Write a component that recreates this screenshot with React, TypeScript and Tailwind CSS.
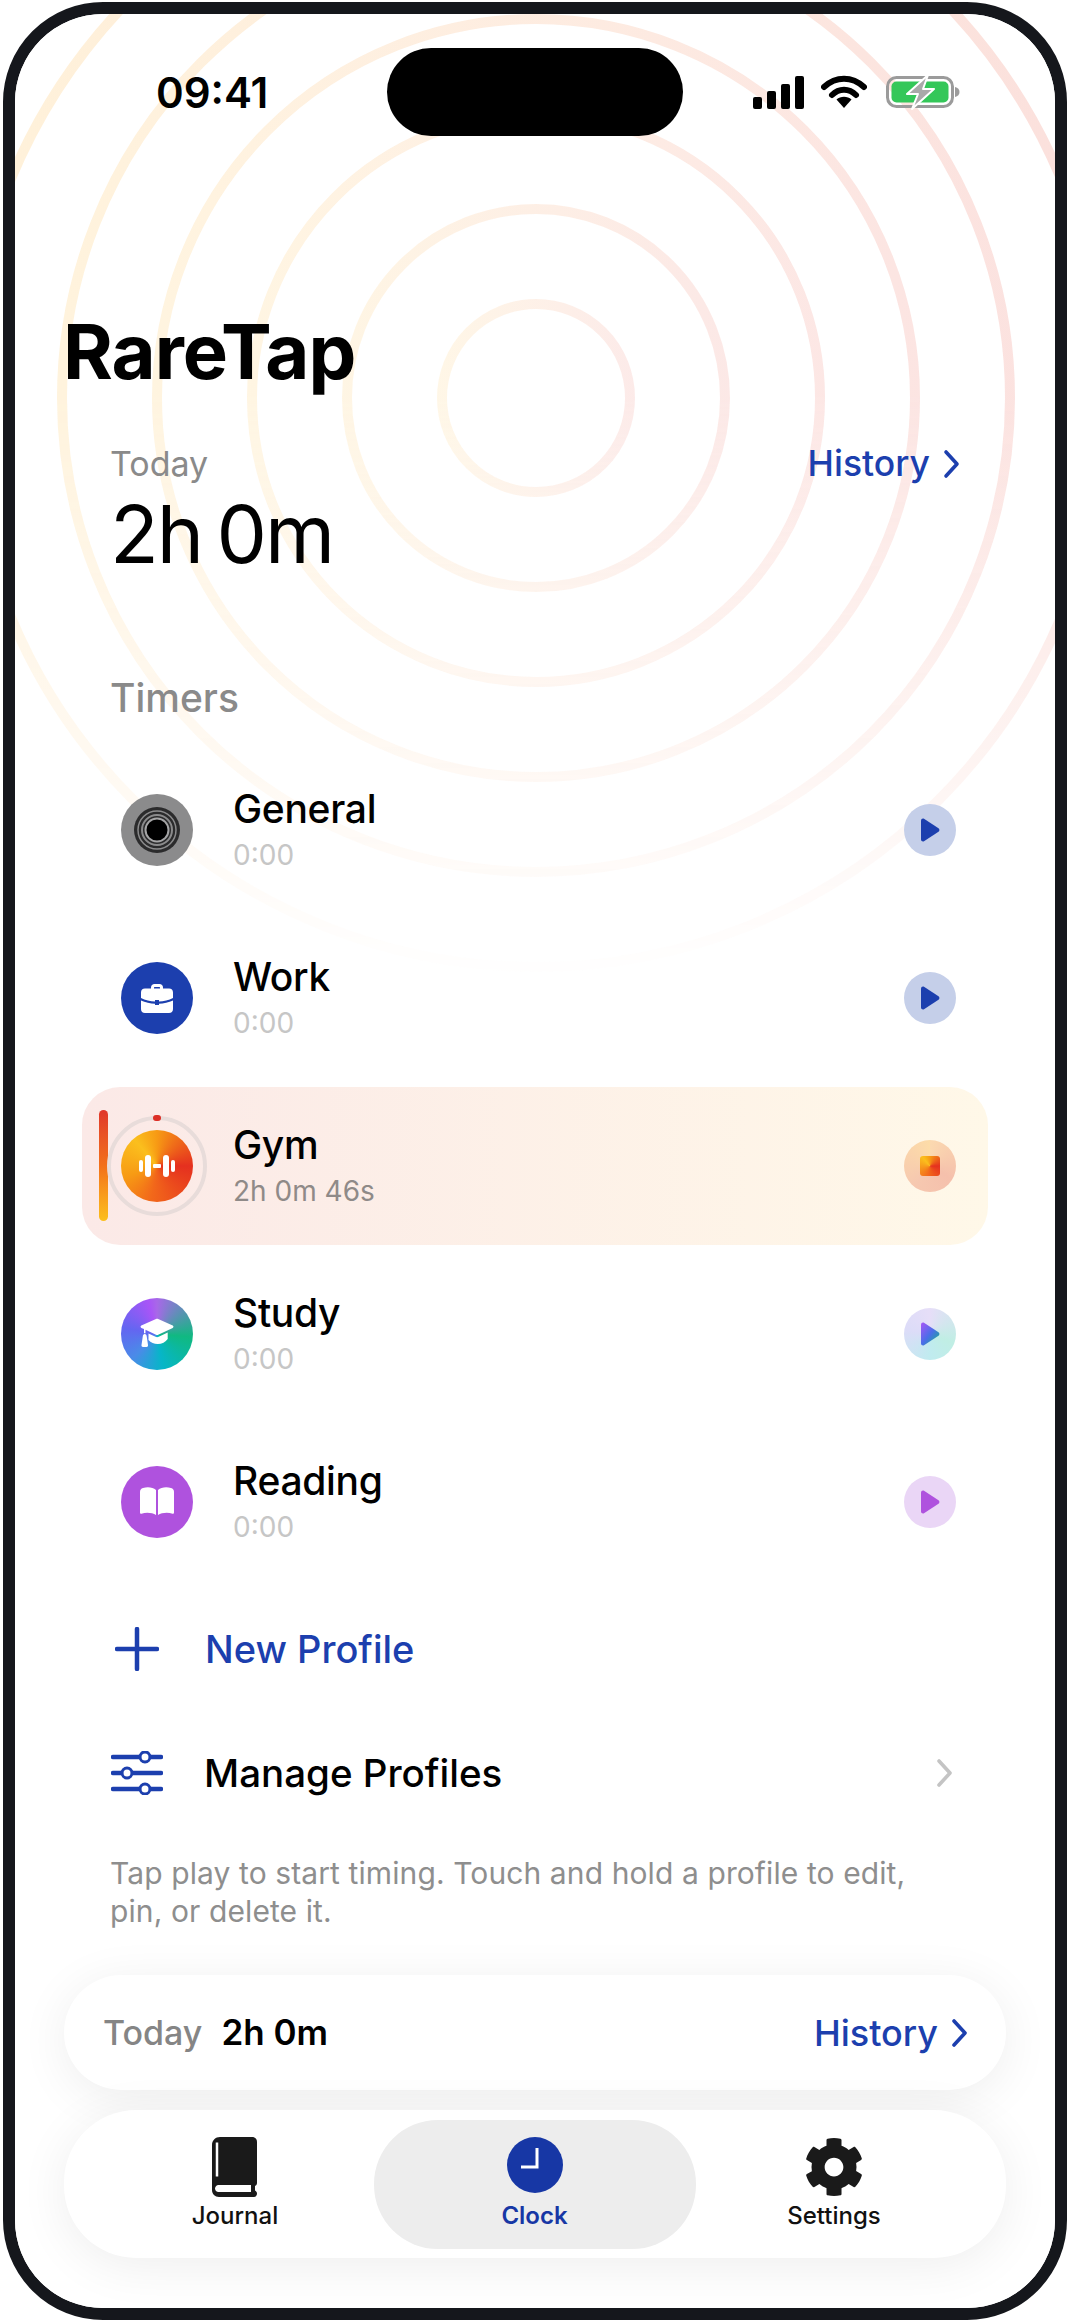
import { FaCog } from "react-icons/fa";

const FONT = "font-['Inter','Liberation_Sans',sans-serif]";

function Play({ fill }: { fill: string }) {
  return (
    <svg width="22" height="26" viewBox="0 0 22 26">
      <path
        d="M2 3.5c0-1.6 1.700-2.500 3-1.700l14.500 9.500c1.200 .8 1.200 2.600 0 3.400L5 24.200c-1.300 .8-3 -.1-3-1.700z"
        fill={fill}
      />
    </svg>
  );
}

function Briefcase() {
  return (
    <svg width="36" height="36" viewBox="0 0 36 36" fill="white">
      <path d="M12 9V7.500C12 5.500 13.500 4 15.500 4h5C22.500 4 24 5.500 24 7.500V9h-3V7.500c0-.4-.2-.6-.6-.6h-4.800c-.4 0-.6 .2-.6 .6V9z" />
      <path d="M2 12.500C2 10 3.500 8.500 6 8.500h24c2.500 0 4 1.500 4 4V18c-4 2.200-9.500 3.400-14 3.600V20h-4v1.600C11.500 21.400 6 20.200 2 18z" />
      <path d="M2 20.500c4 2 9.500 3 14 3.200V25h4v-1.300c4.500-.2 10-1.200 14-3.200V29c0 2.500-1.500 4-4 4H6c-2.500 0-4-1.500-4-4z" />
    </svg>
  );
}

function Dumbbell() {
  return (
    <svg width="38" height="28" viewBox="0 0 38 28" fill="white">
      <rect x="1" y="8" width="4" height="12" rx="2" />
      <rect x="7" y="3" width="6" height="22" rx="3" />
      <rect x="15" y="12" width="8" height="4" rx="1" />
      <rect x="25" y="3" width="6" height="22" rx="3" />
      <rect x="33" y="8" width="4" height="12" rx="2" />
    </svg>
  );
}

function Cap() {
  return (
    <svg width="36" height="36" viewBox="0 0 36 36" fill="white">
      <path d="M17 3c.7-.3 1.500-.3 2.200 0l14.500 6.600c1 .5 1 1.800 0 2.300L19.200 18.800c-.7 .3-1.500 .3-2.200 0L6.500 13.800v3.500H5v-4.300L2.300 11.900c-1-.5-1-1.800 0-2.300z" />
      <path d="M9.500 17.500l7 3.300c1 .5 2.200 .5 3.200 0l9-4.200v6.400c-2 3-6 5-10 5-3.500 0-7-1.500-9.200-4z" />
      <path d="M5.700 18c1.200 0 2 1 2 2.300l1.300 8.700c.2 1-.5 2-1.500 2H4c-1 0-1.700-1-1.500-2l1.300-8.700c0-1.300.8-2.300 1.900-2.300z" />
    </svg>
  );
}

function OpenBook() {
  return (
    <svg width="36" height="32" viewBox="0 0 36 32" fill="white">
      <path d="M1 6c0-2 1-3.500 3-4 5-1.300 10-.6 13 2v25c-3.500-2.400-10-3-14.500-1.300C1.700 28 1 27.500 1 26.500z" />
      <path d="M35 6c0-2-1-3.500-3-4-5-1.300-10-.6-13 2v25c3.500-2.400 10-3 14.500-1.300 .8 .3 1.500-.2 1.500-1.200z" />
    </svg>
  );
}

function Chevron({ className }: { className: string }) {
  return (
    <svg className={className} width="17" height="30" viewBox="0 0 17 30" fill="none">
      <path d="M3 3l11 12L3 27" stroke="currentColor" strokeWidth="3.600" strokeLinecap="round" strokeLinejoin="round" />
    </svg>
  );
}

const rows = [
  { name: "General", time: "0:00", kind: "general" },
  { name: "Work", time: "0:00", kind: "work" },
  { name: "Gym", time: "2h 0m 46s", kind: "gym" },
  { name: "Study", time: "0:00", kind: "study" },
  { name: "Reading", time: "0:00", kind: "reading" },
];

function RowIcon({ kind }: { kind: string }) {
  if (kind === "general") {
    return (
      <div className="flex h-[72px] w-[72px] items-center justify-center rounded-full bg-[#8b8b8c]">
        <svg width="48" height="48" viewBox="0 0 48 48" fill="none">
          <circle cx="24" cy="24" r="23" fill="#2b2b2c" />
          <circle cx="24" cy="24" r="19" stroke="#8b8b8c" strokeWidth="1.500" />
          <circle cx="24" cy="24" r="15" stroke="#8b8b8c" strokeWidth="2" />
          <circle cx="24" cy="24" r="11.500" fill="#000" stroke="#a5a5a6" strokeWidth="2" />
        </svg>
      </div>
    );
  }
  if (kind === "work") {
    return (
      <div className="flex h-[72px] w-[72px] items-center justify-center rounded-full bg-[#1c3fae]">
        <Briefcase />
      </div>
    );
  }
  if (kind === "gym") {
    return (
      <div className="relative flex h-[72px] w-[72px] items-center justify-center">
        <div className="absolute -inset-[14px] rounded-full border-[4px] border-[#e8dcda]" />
        <div className="absolute -top-[15px] left-[32px] h-[6px] w-[8px] rounded-full bg-[#dc2f26]" />
        <div className="flex h-[72px] w-[72px] items-center justify-center rounded-full bg-[conic-gradient(from_0deg,#f79a14,#e5301f_90deg,#f2681a_190deg,#f79a14_250deg,#fbbf1d_320deg,#f79a14)]">
          <Dumbbell />
        </div>
      </div>
    );
  }
  if (kind === "study") {
    return (
      <div className="flex h-[72px] w-[72px] items-center justify-center rounded-full bg-[conic-gradient(from_0deg,#a868e8,#10b981_95deg,#06b6c8_170deg,#4a8be8_225deg,#6366f1_280deg,#a855f7_345deg,#a868e8)]">
        <Cap />
      </div>
    );
  }
  return (
    <div className="flex h-[72px] w-[72px] items-center justify-center rounded-full bg-[#af52de]">
      <OpenBook />
    </div>
  );
}

function RowAction({ kind }: { kind: string }) {
  if (kind === "gym") {
    return (
      <div className="flex h-[52px] w-[52px] items-center justify-center rounded-full bg-[conic-gradient(from_0deg,#fbd9b0,#f5c0ac_120deg,#f6c8b0_220deg,#fddca8)]">
        <div className="h-[20px] w-[20px] rounded-[3px] bg-[conic-gradient(from_0deg,#f79a14,#e5301f_90deg,#f2681a_190deg,#fbbf1d_320deg,#f79a14)]" />
      </div>
    );
  }
  if (kind === "study") {
    return (
      <div className="flex h-[52px] w-[52px] items-center justify-center rounded-full bg-[conic-gradient(from_0deg,#e6def8,#c0eee4_110deg,#c0ebef_180deg,#dcdcf8_280deg,#e6def8)]">
        <svg width="22" height="26" viewBox="0 0 22 26">
          <defs>
            <linearGradient id="studyPlay" x1="0" y1="0" x2="1" y2="1">
              <stop offset="0" stopColor="#a855f7" />
              <stop offset="0.5" stopColor="#4a6ee8" />
              <stop offset="1" stopColor="#10b981" />
            </linearGradient>
          </defs>
          <path
            d="M2 3.500c0-1.600 1.700-2.500 3-1.700l14.500 9.500c1.200 .8 1.200 2.600 0 3.400L5 24.200c-1.300 .8-3-.1-3-1.700z"
            fill="url(#studyPlay)"
          />
        </svg>
      </div>
    );
  }
  if (kind === "reading") {
    return (
      <div className="flex h-[52px] w-[52px] items-center justify-center rounded-full bg-[#ead6f6]">
        <Play fill="#af52de" />
      </div>
    );
  }
  return (
    <div className="flex h-[52px] w-[52px] items-center justify-center rounded-full bg-[#c5cfe9]">
      <Play fill="#1c3fae" />
    </div>
  );
}

function Row({ name, time, kind }: { name: string; time: string; kind: string }) {
  const active = kind === "gym";
  return (
    <div
      className={
        active
          ? "relative flex h-[158px] items-center rounded-[38px] bg-gradient-to-r from-[#fbe9e7] to-[#fff8e8] pl-[39px] pr-[32px]"
          : "relative flex h-[158px] items-center pl-[39px] pr-[32px]"
      }
    >
      {active && (
        <div className="absolute left-[17px] top-[23px] h-[111px] w-[9px] rounded-full bg-gradient-to-b from-[#e0352a] via-[#f2701a] to-[#fbbf1d]" />
      )}
      <RowIcon kind={kind} />
      <div className="ml-[40px] flex flex-1 flex-col">
        <span className="text-[39px] leading-[46px] font-medium tracking-[-0.3px] text-black">{name}</span>
        <span className={active ? "mt-[4px] text-[28px] leading-[38px] text-[#8f8a88]" : "mt-[4px] text-[28px] leading-[38px] text-[#c6c6c6]"}>
          {time}
        </span>
      </div>
      <RowAction kind={kind} />
    </div>
  );
}

export default function App() {
  return (
    <div className={`${FONT} h-[2323px] w-[1070px] bg-white px-[3px] pt-[2px]`}>
      <div className="h-[2318px] w-[1064px] rounded-[100px] border-[12px] border-[#15171c] bg-white">
        <div className="relative h-full overflow-hidden rounded-[88px] bg-white">
          {/* Decorative rings */}
          <svg
            className="absolute left-0 top-0 [mask-image:linear-gradient(to_bottom,black_38%,transparent_97%)]"
            width="1040"
            height="1000"
            viewBox="0 0 1040 1000"
            fill="none"
          >
            <defs>
              <linearGradient id="ringFade" x1="0" y1="0" x2="1" y2="0">
                <stop offset="0" stopColor="#fff2da" />
                <stop offset="1" stopColor="#fbe0dd" />
              </linearGradient>
            </defs>
            {[94, 189, 284, 379, 474, 569].map((r, i) => (
              <circle key={r} cx="521" cy="384" r={r} stroke="url(#ringFade)" strokeWidth="10" opacity={0.65 + i * 0.07} />
            ))}
          </svg>

          <div className="relative flex h-full flex-col">
            {/* Status bar */}
            <div className="flex h-[122px] items-start pt-[34px]">
              <span className="ml-[141px] w-[231px] pt-[20px] text-[42px] leading-[50px] font-semibold text-black">09:41</span>
              <div className="h-[88px] w-[296px] rounded-full bg-black" />
              <div className="ml-[70px] flex items-center pt-[26px]">
                <div className="flex items-end gap-[5px]">
                  <div className="h-[12px] w-[9px] rounded-[2px] bg-black" />
                  <div className="h-[18px] w-[9px] rounded-[2px] bg-black" />
                  <div className="h-[25px] w-[9px] rounded-[2px] bg-black" />
                  <div className="h-[33px] w-[9px] rounded-[2px] bg-black" />
                </div>
                <svg className="ml-[17px]" width="46" height="34" viewBox="0 0 46 34" fill="none">
                  <path d="M3 12C15 1 31 1 43 12" stroke="black" strokeWidth="6" strokeLinecap="round" />
                  <path d="M11 20C18 13 28 13 35 20" stroke="black" strokeWidth="6" strokeLinecap="round" />
                  <path d="M15.500 24.500c4-3.800 11-3.800 15 0L23 33z" fill="black" />
                </svg>
                <svg className="ml-[19px]" width="74" height="36" viewBox="0 0 74 36" fill="none">
                  <rect x="1.500" y="3.500" width="65" height="29" rx="9" stroke="#9b9b9b" strokeWidth="3" />
                  <rect x="5.500" y="7.500" width="57" height="21" rx="5" fill="#34c759" />
                  <path d="M69 13c3 .6 4.500 2.500 4.500 5S72 22.400 69 23z" fill="#9b9b9b" />
                  <path d="M42 1L21 20h11l-6 15 22-20H37z" fill="#a9a9a9" stroke="white" strokeWidth="2" strokeLinejoin="round" />
                </svg>
              </div>
            </div>

            {/* Header */}
            <h1 className="ml-[48px] mt-[175px] text-[76px] leading-[80px] font-bold tracking-[-1px] text-black">RareTap</h1>
            <div className="ml-[95px] mr-[95px] mt-[52px] flex items-center justify-between">
              <span className="text-[34px] leading-[42px] text-[#8a8a8a]">Today</span>
              <span className="flex items-center gap-[13px] text-[35.500px] leading-[42px] font-medium text-[#1c3fae]">
                History
                <Chevron className="text-[#1c3fae]" />
              </span>
            </div>
            <div className="ml-[95px] mt-[4px] text-[80px] leading-[90px] tracking-[-2px] text-black [word-spacing:-6px]">2h 0m</div>

            <div className="ml-[95px] mt-[97px] text-[39px] leading-[44px] font-medium text-[#8a8a8a]">Timers</div>

            {/* Timers */}
            <div className="ml-[67px] mr-[67px] mt-[31px] flex flex-col gap-[10px]">
              {rows.map((r) => (
                <Row key={r.name} {...r} />
              ))}
            </div>

            <div className="ml-[100px] mt-[38px] flex h-[60px] items-center">
              <svg width="44" height="44" viewBox="0 0 44 44" fill="none">
                <path d="M22 2v40M2 22h40" stroke="#1c3fae" strokeWidth="4.500" strokeLinecap="round" />
              </svg>
              <span className="ml-[46px] text-[38px] leading-[46px] font-medium text-[#1c3fae]">New Profile</span>
            </div>

            <div className="ml-[96px] mr-[102px] mt-[64px] flex h-[60px] items-center">
              <svg width="52" height="44" viewBox="0 0 52 44" fill="none" stroke="#1c3fae">
                <path d="M2 6h26M40 6h10M2 22h8M22 22h28M2 38h26M40 38h10" strokeWidth="4.500" strokeLinecap="round" />
                <circle cx="34" cy="6" r="5" strokeWidth="3" />
                <circle cx="16" cy="22" r="5" strokeWidth="3" />
                <circle cx="34" cy="38" r="5" strokeWidth="3" />
              </svg>
              <span className="ml-[41px] flex-1 text-[38.500px] leading-[46px] font-medium text-black">Manage Profiles</span>
              <Chevron className="text-[#c4c4c4]" />
            </div>

            <p className="ml-[95px] mr-[120px] mt-[51px] text-[30px] leading-[38px] tracking-[0.1px] text-[#8e8e8e]">
              Tap play to start timing. Touch and hold a profile to edit, pin, or delete it.
            </p>

            {/* Today pill */}
            <div className="mx-[49px] mt-[45px] flex h-[115px] items-center rounded-[58px] bg-white pl-[39px] pr-[38px] shadow-[0_8px_50px_rgba(0,0,0,0.07)]">
              <span className="text-[34px] font-medium text-[#858585]">Today</span>
              <span className="ml-[19px] flex-1 text-[35px] font-semibold text-black">2h 0m</span>
              <span className="flex items-center gap-[13px] text-[36px] font-medium text-[#1c3fae]">
                History
                <Chevron className="text-[#1c3fae]" />
              </span>
            </div>

            {/* Tab bar */}
            <div className="mx-[49px] mt-[20px] flex h-[148px] items-center justify-between rounded-[72px] bg-white pl-[105px] pr-[106px] shadow-[0_8px_50px_rgba(0,0,0,0.07)]">
              <div className="flex w-[132px] flex-col items-center">
                <svg width="46" height="60" viewBox="0 0 46 60" fill="none">
                  <path d="M8 0h32c3 0 5 2 5 5v41c0 1.500-1 2.500-2 3v4.500c1 .5 2 1.500 2 3S44 60 42 60H7c-4 0-7-3-7-7V8c0-4.500 3.500-8 8-8z" fill="#1a1a1a" />
                  <path d="M5 5.500v34" stroke="white" strokeWidth="2.500" />
                  <path d="M6 48h33v7H6c-2-.5-3-2-3-3.500S4 48.500 6 48z" fill="white" />
                </svg>
                <span className="mt-[4px] text-[24px] leading-[30px] font-medium text-[#111]">Journal</span>
              </div>
              <div className="flex h-[129px] w-[322px] flex-col items-center justify-center rounded-[64px] bg-[#ededed]">
                <svg width="56" height="56" viewBox="0 0 56 56">
                  <circle cx="28" cy="28" r="28" fill="#1737a5" />
                  <path d="M30 11v19H14" fill="none" stroke="white" strokeWidth="3" />
                </svg>
                <span className="mt-[8px] text-[24px] leading-[30px] font-semibold text-[#1737a5]">Clock</span>
              </div>
              <div className="flex w-[132px] flex-col items-center">
                <FaCog className="h-[60px] w-[60px] text-[#1a1a1a]" />
                <span className="mt-[4px] text-[24px] leading-[30px] font-medium text-[#111]">Settings</span>
              </div>
            </div>
          </div>
        </div>
      </div>
    </div>
  );
}
